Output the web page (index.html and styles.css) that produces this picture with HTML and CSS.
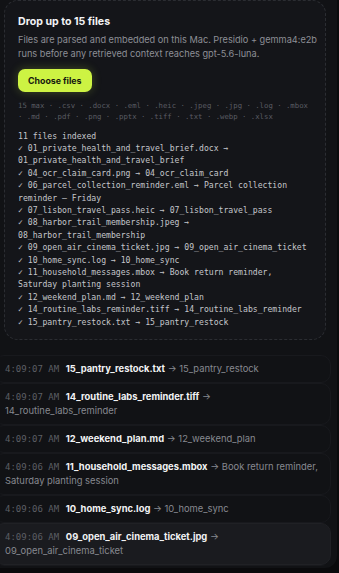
FILE: index.html
```html
<!DOCTYPE html>
<html lang="en">
<head>
<meta charset="utf-8">
<link rel="stylesheet" href="styles.css">
</head>
<body>
<div class="panel">
  <section class="drop">
    <h2 class="drop-title">Drop up to 15 files</h2>
    <p class="drop-desc">Files are parsed and embedded on this Mac. Presidio + gemma4:e2b runs before any retrieved context reaches gpt-5.6-luna.</p>
    <button class="choose">Choose files</button>
    <p class="exts">15 max ·&nbsp;.csv ·&nbsp;.docx ·&nbsp;.eml ·&nbsp;.heic ·&nbsp;.jpeg ·&nbsp;.jpg ·&nbsp;.log ·&nbsp;.mbox ·&nbsp;.md ·&nbsp;.pdf ·&nbsp;.png ·&nbsp;.pptx ·&nbsp;.tiff ·&nbsp;.txt ·&nbsp;.webp ·&nbsp;.xlsx</p>
    <div class="indexed">
      <div class="indexed-count">11 files indexed</div>
      <div class="indexed-line">✓ 01_private_health_and_travel_brief.docx → 01_private_health_and_travel_brief</div>
      <div class="indexed-line">✓ 04_ocr_claim_card.png → 04_ocr_claim_card</div>
      <div class="indexed-line">✓ 06_parcel_collection_reminder.eml → Parcel collection reminder — Friday</div>
      <div class="indexed-line">✓ 07_lisbon_travel_pass.heic → 07_lisbon_travel_pass</div>
      <div class="indexed-line">✓ 08_harbor_trail_membership.jpeg → 08_harbor_trail_membership</div>
      <div class="indexed-line">✓ 09_open_air_cinema_ticket.jpg → 09_open_air_cinema_ticket</div>
      <div class="indexed-line">✓ 10_home_sync.log → 10_home_sync</div>
      <div class="indexed-line">✓ 11_household_messages.mbox → Book return reminder, Saturday planting session</div>
      <div class="indexed-line">✓ 12_weekend_plan.md → 12_weekend_plan</div>
      <div class="indexed-line">✓ 14_routine_labs_reminder.tiff → 14_routine_labs_reminder</div>
      <div class="indexed-line">✓ 15_pantry_restock.txt → 15_pantry_restock</div>
    </div>
  </section>
  <div class="activity">
    <div class="row"><span class="time">4:09:07 AM</span> <span class="file">15_pantry_restock.txt</span> <span class="result">→ 15_pantry_restock</span></div>
    <div class="row"><span class="time">4:09:07 AM</span> <span class="file">14_routine_labs_reminder.tiff</span> <span class="result">→ 14_routine_labs_reminder</span></div>
    <div class="row"><span class="time">4:09:07 AM</span> <span class="file">12_weekend_plan.md</span> <span class="result">→ 12_weekend_plan</span></div>
    <div class="row"><span class="time">4:09:06 AM</span> <span class="file">11_household_messages.mbox</span> <span class="result">→ Book return reminder, Saturday planting session</span></div>
    <div class="row"><span class="time">4:09:06 AM</span> <span class="file">10_home_sync.log</span> <span class="result">→ 10_home_sync</span></div>
    <div class="row row-active"><span class="time">4:09:06 AM</span> <span class="file">09_open_air_cinema_ticket.jpg</span> <span class="result">→ 09_open_air_cinema_ticket</span></div>
    <div class="row"><span class="time">4:09:06 AM</span> <span class="file">08_harbor_trail_membership.jpeg</span> <span class="result">→ 08_harbor_trail_membership</span></div>
    <div class="row"><span class="time">4:09:05 AM</span> <span class="file">07_lisbon_travel_pass.heic</span> <span class="result">→ 07_lisbon_travel_pass</span></div>
    <div class="row"><span class="time">4:09:05 AM</span> <span class="file">06_parcel_collection_reminder.eml</span> <span class="result">→ Parcel collection reminder — Friday</span></div>
    <div class="row"><span class="time">4:09:05 AM</span> <span class="file">04_ocr_claim_card.png</span> <span class="result">→ 04_ocr_claim_card</span></div>
    <div class="row"><span class="time">4:09:04 AM</span> <span class="file">01_private_health_and_travel_brief.docx</span> <span class="result">→ 01_private_health_and_travel_brief</span></div>
  </div>
</div>
</body>
</html>
```
FILE: styles.css
```css
* { box-sizing: border-box; }
html, body { margin: 0; padding: 0; }
body {
  background: #0a0a0c;
  width: 339px;
  height: 573px;
  overflow: hidden;
  font-family: Inter, "Liberation Sans", sans-serif;
}
.panel {
  margin-left: -6px;
  width: 343px;
  height: 568px;
  background: #111215;
  border-radius: 0 0 12px 0;
  padding: 0 11px 0 10px;
  display: flex;
  flex-direction: column;
  overflow: hidden;
}
.drop {
  flex: none;
  height: 340px;
  background: #141519;
  border: 1px dashed #2b2d32;
  border-radius: 14px;
  padding: 14px 8px 0 13px;
}
.drop-title {
  margin: 0;
  font-size: 10.6px;
  line-height: 14px;
  font-weight: 700;
  color: #f2f3f5;
}
.drop-desc {
  margin: 4px 0 0;
  font-size: 9.2px;
  line-height: 13.5px;
  color: #8d8f96;
}
.choose {
  display: block;
  margin-top: 9px;
  height: 23px;
  padding: 0 10px;
  border: none;
  border-radius: 7px;
  background: #cdf343;
  color: #15170f;
  font-family: Inter, "Liberation Sans", sans-serif;
  font-weight: 700;
  font-size: 8.8px;
  box-shadow: 0 0 10px rgba(205, 243, 67, 0.25);
}
.exts {
  margin: 7.5px 0 0;
  font-family: "DejaVu Sans Mono", monospace;
  font-size: 7.3px;
  line-height: 11px;
  color: #5a5c63;
}
.indexed {
  margin-top: 8px;
  padding-right: 5px;
  font-family: "DejaVu Sans Mono", monospace;
  font-size: 8.15px;
  line-height: 12.4px;
  color: #c4c6cb;
}
.activity {
  flex: none;
  margin: 15px -11px 0 -10px;
  height: 211px;
  overflow-y: scroll;
  padding-right: 6px;
}
.activity::-webkit-scrollbar { width: 6px; }
.activity::-webkit-scrollbar-track { background: transparent; }
.activity::-webkit-scrollbar-thumb {
  background: #2e3034;
  border-radius: 3px;
  border-left: 2px solid transparent;
  background-clip: padding-box;
}
.row {
  padding: 6px 10px;
  border: 1px solid #18191d;
  border-radius: 10px;
  font-size: 9.4px;
  line-height: 14px;
  color: #878990;
}
.row-active {
  background: #1a1b1f;
  border-color: #202125;
}
.time {
  font-family: "DejaVu Sans Mono", monospace;
  font-size: 9px;
  color: #5c5e64;
  margin-right: 4px;
}
.file {
  font-weight: 700;
  color: #f1f2f4;
}
```
